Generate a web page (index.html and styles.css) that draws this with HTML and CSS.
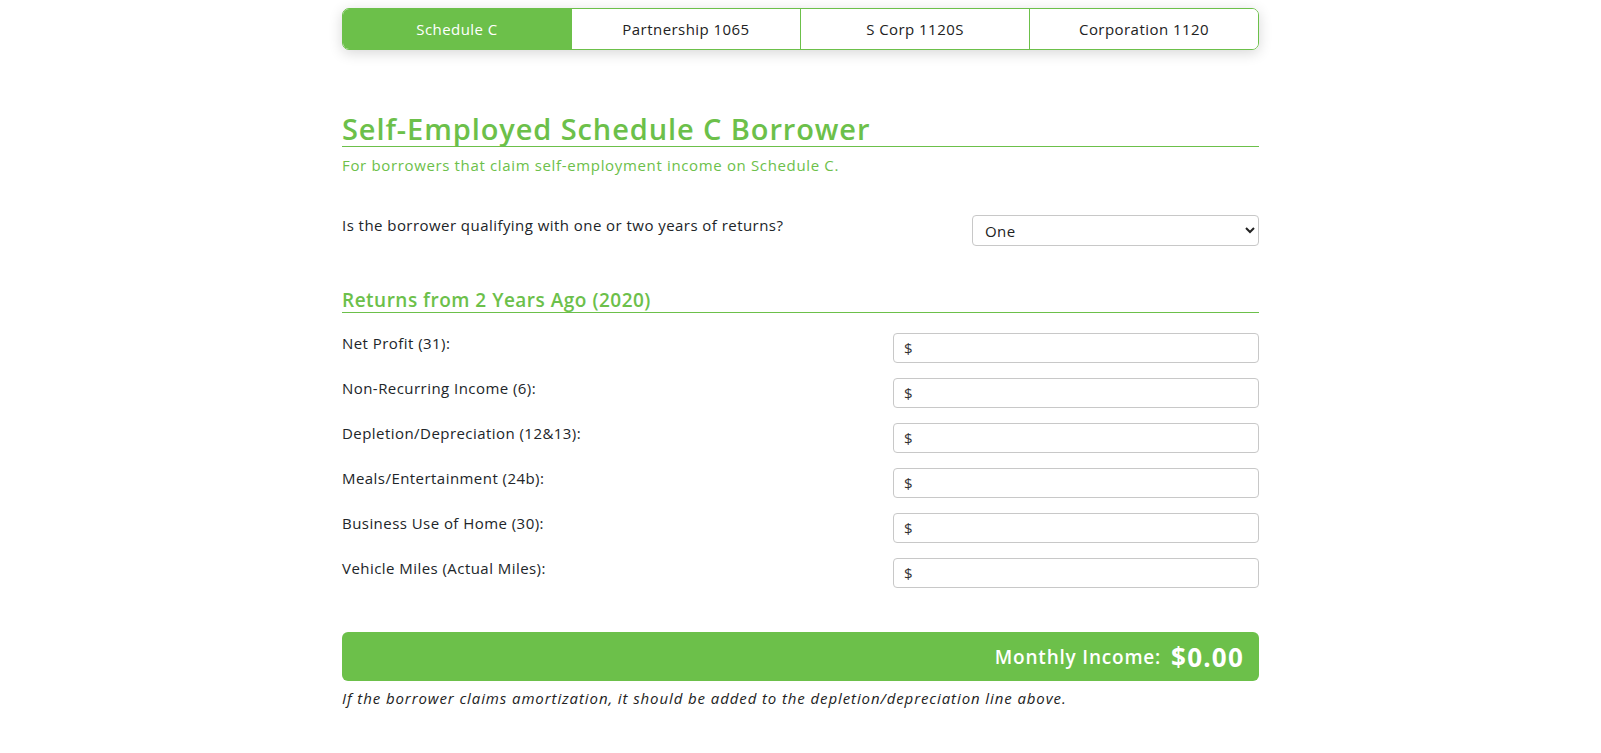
FILE: index.html
```html
<!DOCTYPE html>
<html lang="en">
<head>
<meta charset="utf-8">
<title>Self-Employed Schedule C Borrower</title>
<link rel="stylesheet" href="styles.css">
</head>
<body>
<div class="page">
  <nav class="tabs">
    <div class="tab active">Schedule C</div>
    <div class="tab">Partnership 1065</div>
    <div class="tab">S Corp 1120S</div>
    <div class="tab">Corporation 1120</div>
  </nav>

  <h1 class="title">Self-Employed Schedule C Borrower</h1>
  <p class="subtitle">For borrowers that claim self-employment income on Schedule C.</p>

  <div class="question">
    <label class="qlabel">Is the borrower qualifying with one or two years of returns?</label>
    <select class="select">
      <option>One</option>
      <option>Two</option>
    </select>
  </div>

  <h2 class="section">Returns from 2 Years Ago (2020)</h2>

  <div class="rows">
    <div class="row"><span class="label">Net Profit (31):</span><div class="field"><span class="cur">$</span><input class="inp" type="text"></div></div>
    <div class="row"><span class="label">Non-Recurring Income (6):</span><div class="field"><span class="cur">$</span><input class="inp" type="text"></div></div>
    <div class="row"><span class="label">Depletion/Depreciation (12&amp;13):</span><div class="field"><span class="cur">$</span><input class="inp" type="text"></div></div>
    <div class="row"><span class="label">Meals/Entertainment (24b):</span><div class="field"><span class="cur">$</span><input class="inp" type="text"></div></div>
    <div class="row"><span class="label">Business Use of Home (30):</span><div class="field"><span class="cur">$</span><input class="inp" type="text"></div></div>
    <div class="row"><span class="label">Vehicle Miles (Actual Miles):</span><div class="field"><span class="cur">$</span><input class="inp" type="text"></div></div>
  </div>

  <div class="total">
    <span class="total-label">Monthly Income:</span>
    <span class="total-value">$0.00</span>
  </div>
  <p class="note">If the borrower claims amortization, it should be added to the depletion/depreciation line above.</p>
</div>
</body>
</html>
```

FILE: styles.css
```css
* { box-sizing: border-box; }
body {
  margin: 0;
  background: #fff;
  font-family: "Open Sans", "Liberation Sans", sans-serif;
  color: #212529;
  font-size: 15px;
  letter-spacing: 0.45px;
}
.page {
  width: 917px;
  margin: 0 auto;
  padding-top: 8px;
  padding-bottom: 40px;
}
.tabs {
  display: flex;
  height: 42px;
  border: 1px solid #6cc04a;
  border-radius: 7px;
  overflow: hidden;
  box-shadow: 0 3px 14px rgba(0,0,0,0.16);
}
.tab {
  flex: 1;
  display: flex;
  align-items: center;
  justify-content: center;
  font-size: 15px;
  color: #222;
  border-left: 1px solid #6cc04a;
  background: #fff;
}
.tab:first-child { border-left: none; }
.tab.active { background: #6cc04a; color: #fff; }

.title {
  margin: 62px 0 0;
  font-size: 29px;
  line-height: 34px;
  font-weight: 600;
  letter-spacing: 0.9px;
  color: #6cc04a;
  border-bottom: 1px solid #6cc04a;
  padding-bottom: 0;
}
.subtitle {
  margin: 8px 0 0;
  font-size: 15px;
  line-height: 20px;
  letter-spacing: 0.65px;
  color: #6cc04a;
}
.question {
  display: flex;
  justify-content: space-between;
  align-items: flex-start;
  margin-top: 40px;
}
.qlabel { font-size: 15px; line-height: 20px; }
.select {
  width: 287px;
  height: 31px;
  border: 1px solid #c8c8c8;
  border-radius: 4px;
  padding: 0 8px;
  font-family: inherit;
  font-size: 15px;
  letter-spacing: 0.45px;
  color: #222;
  background: #fff;
}
.section {
  margin: 42px 0 0;
  font-size: 19px;
  line-height: 24px;
  font-weight: 600;
  letter-spacing: 0.5px;
  color: #6cc04a;
  border-bottom: 1px solid #6cc04a;
}
.rows {
  display: flex;
  flex-direction: column;
  gap: 15px;
  margin-top: 20px;
}
.row {
  display: flex;
  justify-content: space-between;
  align-items: flex-start;
}
.label { font-size: 15px; line-height: 20px; }
.field {
  width: 366px;
  height: 30px;
  border: 1px solid #c8c8c8;
  border-radius: 4px;
  display: flex;
  align-items: center;
  padding-left: 10px;
}
.cur { font-size: 15px; color: #333; }
.inp {
  flex: 1;
  border: none;
  outline: none;
  height: 100%;
  font-family: inherit;
  font-size: 15px;
  background: transparent;
}
.total {
  margin-top: 44px;
  height: 49px;
  background: #6cc04a;
  border-radius: 6px;
  display: flex;
  justify-content: flex-end;
  align-items: center;
  gap: 10px;
  padding-right: 15px;
  color: #fff;
}
.total-label { font-size: 19px; font-weight: 600; letter-spacing: 0.8px; }
.total-value { font-size: 26px; font-weight: 700; letter-spacing: 1.2px; }
.note {
  margin: 7px 0 0;
  font-size: 15px;
  line-height: 20px;
  font-style: italic;
  letter-spacing: 0.9px;
  color: #222;
}
```
